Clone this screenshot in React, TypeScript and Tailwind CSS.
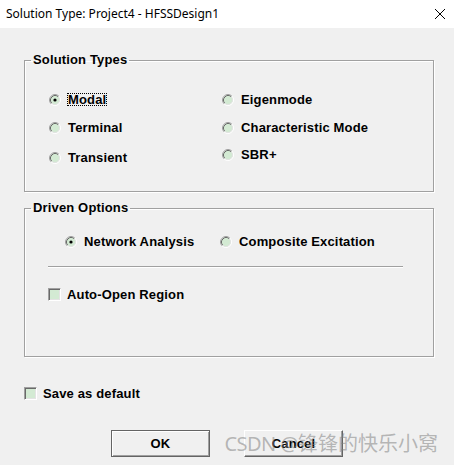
import React from "react";

function Radio({ checked = false }: { checked?: boolean }) {
  return (
    <svg width="12" height="12" viewBox="0 0 12 12" className="shrink-0">
      <circle cx="6" cy="6" r="5" fill="#d3ead3" />
      <path d="M2.11 9.89 A5.5 5.5 0 0 1 9.89 2.11" fill="none" stroke="#a0a0a0" strokeWidth="1" />
      <path d="M9.89 2.11 A5.5 5.5 0 0 1 2.11 9.89" fill="none" stroke="#ffffff" strokeWidth="1" />
      <path d="M2.82 9.18 A4.5 4.5 0 0 1 9.18 2.82" fill="none" stroke="#696969" strokeWidth="1" />
      <path d="M9.18 2.82 A4.5 4.5 0 0 1 2.82 9.18" fill="none" stroke="#e3e3e3" strokeWidth="1" />
      {checked && <circle cx="6" cy="6" r="1.6" fill="#000" />}
    </svg>
  );
}

function Check() {
  return (
    <div className="w-[13px] h-[13px] shrink-0 border border-t-[#a0a0a0] border-l-[#a0a0a0] border-r-white border-b-white bg-[#d3ead3] shadow-[inset_1px_1px_0_#696969,inset_-1px_-1px_0_#e3e3e3]" />
  );
}

function Option({ label, checked, focus }: { label: string; checked?: boolean; focus?: boolean }) {
  return (
    <div className="flex items-center gap-[7px]">
      <Radio checked={checked} />
      <span
        className={
          focus
            ? "border border-dotted border-black leading-[11px] -ml-[1px]"
            : "leading-[13px]"
        }
      >
        {label}
      </span>
    </div>
  );
}

export default function App() {
  return (
    <div className="w-[454px] h-[465px] flex flex-col relative overflow-hidden">
      {/* title bar */}
      <div className="h-[28px] bg-white flex items-center justify-between pl-[6px] pr-[8px] font-['Noto_Sans','Noto_Sans_CJK_SC',sans-serif] text-[12px] text-black">
        <span>Solution Type: Project4 - HFSSDesign1</span>
        <svg width="12" height="12" viewBox="0 0 12 12">
          <path d="M1 1 L11 11 M11 1 L1 11" stroke="#000" strokeWidth="1" />
        </svg>
      </div>

      {/* body */}
      <div className="flex-1 bg-[#f0f0f0] pl-[24px] pr-[20px] font-['Liberation_Sans',Arial,sans-serif] font-bold text-[13px] tracking-[0.15px] text-black">
        {/* Solution Types */}
        <fieldset className="mt-[24px] h-[140px] border border-[#a0a0a0] shadow-[1px_1px_0_#fff,inset_1px_1px_0_#fff]">
          <legend className="ml-[6px] px-[2px] leading-[16px]">Solution Types</legend>
          <div className="grid grid-cols-[173px_1fr] pl-[24px] pt-[25px] gap-y-[15px]">
            <Option label="Modal" checked focus />
            <Option label="Eigenmode" />
            <Option label="Terminal" />
            <Option label="Characteristic Mode" />
            <div className="mt-[2px]">
              <Option label="Transient" />
            </div>
            <div className="-mt-[1px]">
              <Option label="SBR+" />
            </div>
          </div>
        </fieldset>

        {/* Driven Options */}
        <fieldset className="mt-[8px] h-[157px] border border-[#a0a0a0] shadow-[1px_1px_0_#fff,inset_1px_1px_0_#fff]">
          <legend className="ml-[6px] px-[2px] leading-[16px]">Driven Options</legend>
          <div className="grid grid-cols-[155px_1fr] pl-[40px] pt-[19px]">
            <Option label="Network Analysis" checked />
            <Option label="Composite Excitation" />
          </div>
          <div className="ml-[23px] w-[355px] mt-[18px] border-t border-t-[#a0a0a0] border-b border-b-white" />
          <div className="flex items-center gap-[6px] ml-[23px] mt-[20px]">
            <Check />
            <span className="leading-[13px]">Auto-Open Region</span>
          </div>
        </fieldset>

        {/* Save as default */}
        <div className="flex items-center gap-[6px] mt-[30px]">
          <Check />
          <span className="leading-[13px]">Save as default</span>
        </div>

        {/* buttons */}
        <div className="flex gap-[34px] ml-[87px] mt-[30px]">
          <button className="w-[99px] h-[27px] border border-[#646464] bg-[#f0f0f0] shadow-[inset_1px_1px_0_#fff,inset_-1px_-1px_0_#a0a0a0] leading-none">
            OK
          </button>
          <button className="w-[99px] h-[27px] border border-t-[#fff] border-l-[#fff] border-r-[#646464] border-b-[#646464] bg-[#f0f0f0] shadow-[inset_-1px_-1px_0_#a0a0a0] leading-none">
            Cancel
          </button>
        </div>
      </div>

      {/* watermark */}
      <div className="absolute right-[16px] bottom-[9px] flex items-baseline font-['Noto_Sans','Noto_Sans_CJK_SC',sans-serif] leading-[24px] text-[rgba(130,130,130,0.55)] pointer-events-none">
        <span className="text-[20px] tracking-[-0.5px]">CSDN @</span>
        <span className="text-[20px] font-['Noto_Sans_CJK_SC',sans-serif]">锋锋的快乐小窝</span>
      </div>
    </div>
  );
}
